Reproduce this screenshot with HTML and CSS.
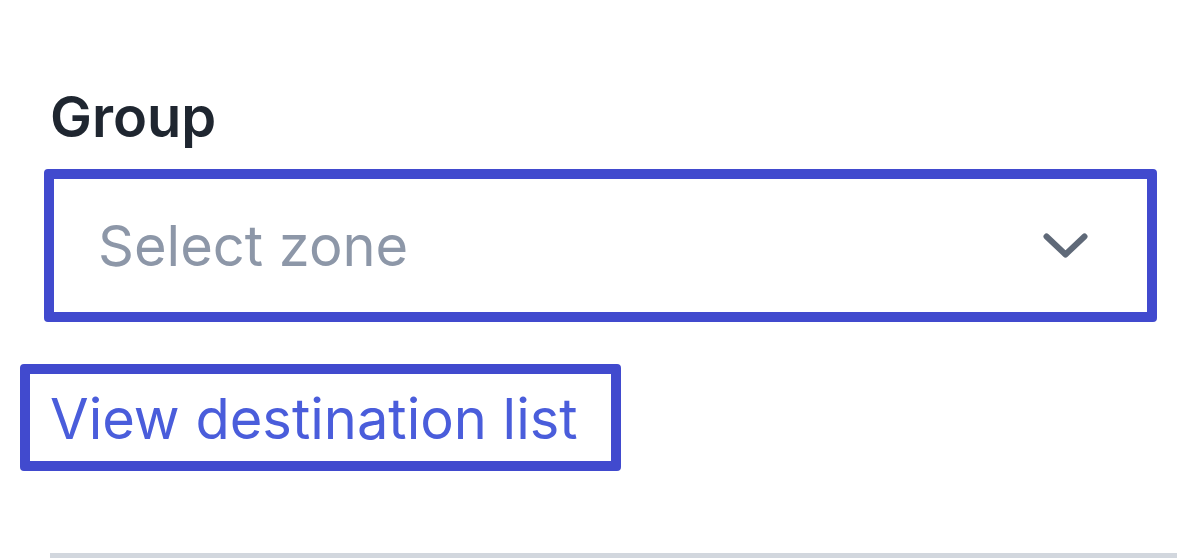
FILE: index.html
```html
<!DOCTYPE html>
<html lang="en">
<head>
<meta charset="utf-8">
<title>Group</title>
<link rel="stylesheet" href="styles.css">
</head>
<body>
<div class="field">
  <label class="label" for="zone">Group</label>
  <div class="select" id="zone" role="combobox" tabindex="0">
    <span class="placeholder">Select zone</span>
    <svg class="chevron" width="45" height="25" viewBox="0 0 45 25" aria-hidden="true">
      <path d="M3.5 3.5 L22.5 21.5 L41.5 3.5" fill="none" stroke="currentColor" stroke-width="6" stroke-linecap="round" stroke-linejoin="round"/>
    </svg>
  </div>
  <div class="link-row">
    <a class="link" href="#">View destination list</a>
  </div>
  <div class="divider"></div>
</div>
</body>
</html>
```
FILE: styles.css
```css
html, body {
  margin: 0;
  padding: 0;
  background: #ffffff;
}

body {
  font-family: Inter, "Noto Sans", "Liberation Sans", sans-serif;
  overflow: hidden;
}

.field {
  display: flex;
  flex-direction: column;
  align-items: flex-start;
  padding: 89px 0 0 50px;
}

.label {
  display: block;
  font-size: 56px;
  line-height: 56px;
  font-weight: 600;
  color: #1f2630;
}

.select {
  box-sizing: border-box;
  align-self: stretch;
  display: flex;
  align-items: center;
  justify-content: space-between;
  height: 153px;
  margin: 24px 20px 0 -6px;
  padding: 0 59px 0 44px;
  border: 10px solid #414ace;
  border-radius: 4px;
  background: #ffffff;
}

.placeholder {
  font-size: 56px;
  line-height: 56px;
  color: #8d97a8;
}

.chevron {
  color: #5f6978;
  display: block;
}

.link-row {
  margin: 42px 0 0 -30px;
}

.link {
  display: inline-block;
  box-sizing: border-box;
  width: 601px;
  height: 107px;
  padding: 4px 20px 0 20px;
  border: 10px solid #414ace;
  border-radius: 4px;
  font-size: 56px;
  line-height: 83px;
  color: #4a5ddb;
  text-decoration: none;
  white-space: nowrap;
}

.divider {
  align-self: stretch;
  height: 5px;
  margin-top: 82px;
  background: #d2d7de;
}
```
